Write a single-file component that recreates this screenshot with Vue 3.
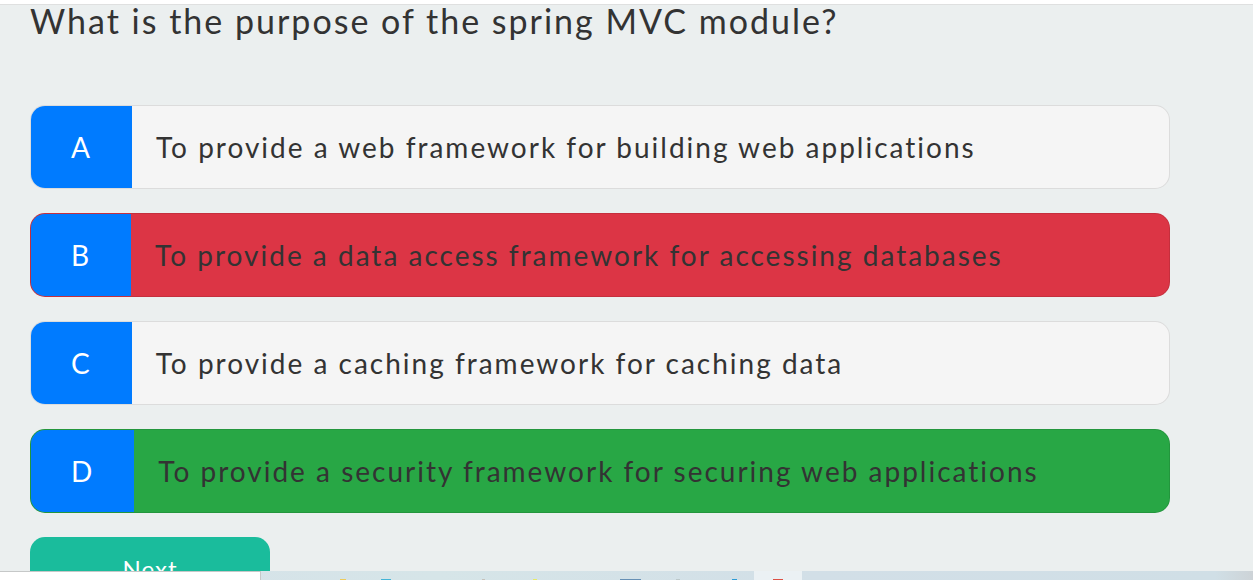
<script setup>
import { ref } from 'vue'

const question = 'What is the purpose of the spring MVC module?'
const options = [
  { key: 'A', text: 'To provide a web framework for building web applications', state: '' },
  { key: 'B', text: 'To provide a data access framework for accessing databases', state: 'incorrect' },
  { key: 'C', text: 'To provide a caching framework for caching data', state: '' },
  { key: 'D', text: 'To provide a security framework for securing web applications', state: 'correct' }
]
const selected = ref('B')

const apps = [
  { x: 18, w: 6, color: '#edcb5c' },
  { x: 11, w: 10, color: '#43b4d6' },
  { x: 0, w: 0, color: 'none' },
  { x: 16, w: 3, color: '#c5c1ba' },
  { x: 19, w: 4, color: '#e6ea68' },
  { x: 0, w: 0, color: 'none' },
  { x: 10, w: 21, color: '#6690b5' },
  { x: 18, w: 4, color: '#bcc8ca' },
  { x: 26, w: 5, color: '#2d9bd5' },
  { x: 19, w: 10, color: '#dc5044', active: true }
]
</script>

<template>
  <div class="screen">
    <div class="top-edge"></div>
    <main class="quiz">
      <h1>{{ question }}</h1>
      <div class="options">
        <button
          v-for="option in options"
          :key="option.key"
          type="button"
          class="option"
          :class="option.state"
          :aria-pressed="selected === option.key"
          @click="selected = option.key"
        >
          <span class="prefix">{{ option.key }}</span>
          <span class="text">{{ option.text }}</span>
        </button>
      </div>
      <button type="button" class="next">Next</button>
    </main>
    <footer class="taskbar">
      <div class="search"></div>
      <div class="apps">
        <svg
          v-for="(app, i) in apps"
          :key="i"
          class="app"
          :class="{ active: app.active }"
          viewBox="0 0 48 9"
          aria-hidden="true"
        >
          <rect :x="app.x" y="8" :width="app.w" height="2" :fill="app.color" />
        </svg>
      </div>
    </footer>
  </div>
</template>

<style>
body {
  margin: 0;
  background: #ebefef;
}
</style>

<style scoped>
.screen {
  display: flex;
  flex-direction: column;
  height: 100vh;
  overflow: hidden;
  background: #ebefef;
  color: #333;
  font-family: Lato, "Liberation Sans", sans-serif;
}

.top-edge {
  flex: none;
  height: 4px;
  background: #fff;
  border-bottom: 1px solid #dfe0e0;
}

.quiz {
  flex: 1;
  min-height: 0;
  overflow: hidden;
  padding: 0 83px 0 30px;
}

h1 {
  margin: 0 0 68px;
  font-size: 34px;
  font-weight: 400;
  line-height: 32px;
  letter-spacing: 2px;
}

.options {
  display: grid;
  gap: 24px;
}

.option {
  display: flex;
  width: 100%;
  padding: 0;
  overflow: hidden;
  border: 1px solid rgba(0, 0, 0, 0.1);
  border-radius: 15px;
  background: #f5f5f5;
  color: #333;
  font: inherit;
  font-size: 28px;
  line-height: 34px;
  letter-spacing: 2px;
  text-align: left;
  cursor: pointer;
}

.option.incorrect {
  background: #dc3545;
}

.option.correct {
  background: #28a745;
}

.prefix {
  padding: 24px 40px;
  background: #007bff;
  color: #fff;
}

.text {
  flex: 1;
  padding: 24px;
}

.next {
  display: block;
  width: 240px;
  margin-top: 24px;
  padding: 16px;
  border: 0;
  border-radius: 15px;
  background: #1abc9c;
  color: #fff;
  font: inherit;
  font-size: 24px;
  line-height: 32px;
  letter-spacing: 1px;
  cursor: pointer;
}

.taskbar {
  display: flex;
  flex: none;
  height: 9px;
  background: linear-gradient(90deg, #d5e1e9, #d6e5e8 35%, #d2dfe7 65%, #d0dfe6 97%, #cdd3d7);
}

.search {
  box-sizing: border-box;
  width: 261px;
  border-top: 1px solid #c6c8c8;
  border-right: 1px solid #c6c8c8;
  background: #fff;
}

.apps {
  display: flex;
  margin-left: 61px;
}

.app {
  display: block;
  width: 48px;
  height: 9px;
}

.app.active {
  background: #ebf1f4;
}
</style>
